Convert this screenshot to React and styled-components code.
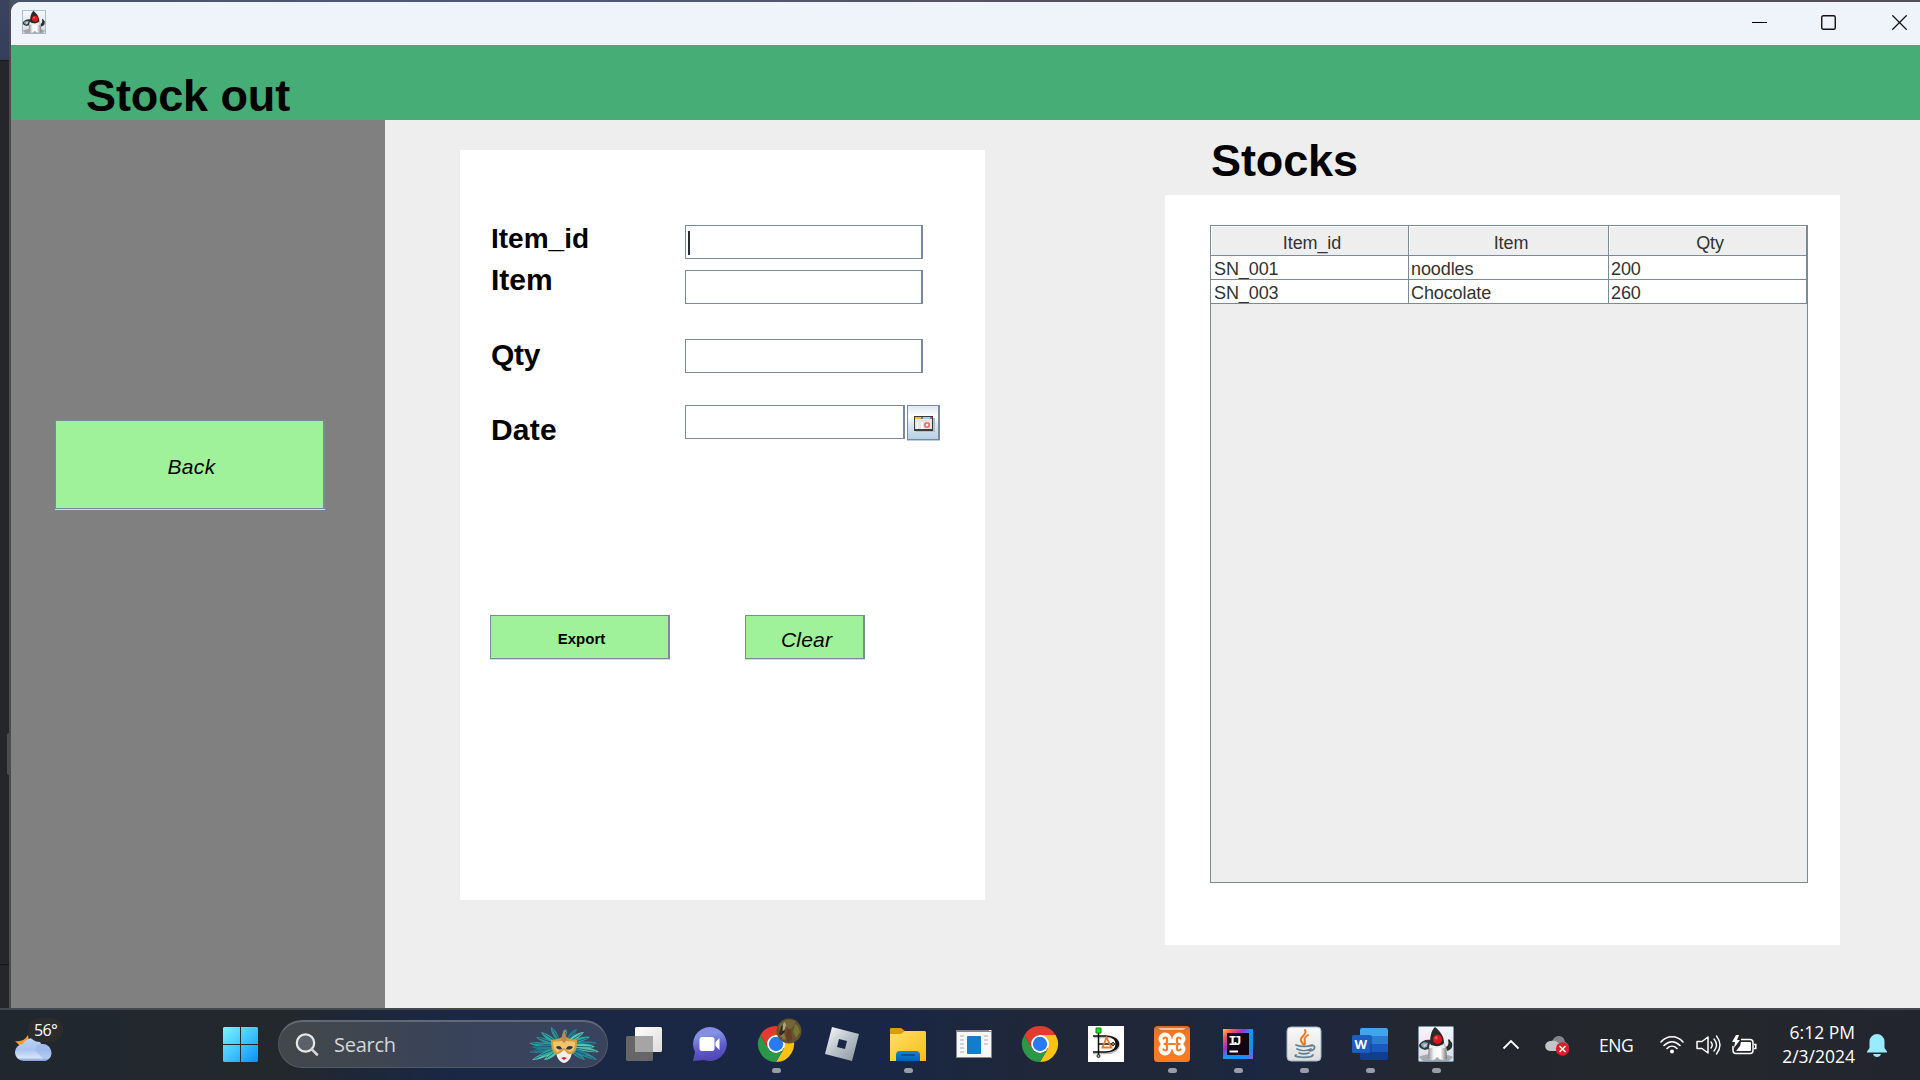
import React from "react";
import styled, { createGlobalStyle } from "styled-components";

const GlobalStyle = createGlobalStyle`
  * { box-sizing: border-box; }
  html, body { margin: 0; padding: 0; overflow: hidden; background: #232529; }
  svg { display: block; flex: none; }
`;

const SWING = `"Liberation Sans", Arial, sans-serif`;
const SHELL = `"Open Sans", "Noto Sans", sans-serif`;
const EDGE = "#7a8a99";

const Desktop = styled.div`
  width: 1920px;
  height: 1080px;
  display: flex;
  flex-direction: column;
  overflow: hidden;
  font-family: ${SWING};
`;

const Stage = styled.div`
  height: 1008px;
  display: flex;
  background: linear-gradient(90deg, #4a5267 0, #505a74 600px, #55505a 1100px, #555057 1920px);
`;

const Behind = styled.div`
  width: 11px;
  display: flex;
  flex-direction: column;
  border-right: 2px solid #4a4c50;
`;

const BehindPart = styled.div`
  height: ${(p) => p.$h}px;
  background: ${(p) => p.$bg};
  border-radius: ${(p) => p.$radius || 0};
  margin-left: ${(p) => p.$inset || 0}px;
`;

const BehindColumn = styled.div`
  background: #242629;
  height: 947px;
`;

const Window = styled.div`
  flex: 1;
  margin-top: 2px;
  display: flex;
  flex-direction: column;
  border-top-left-radius: 10px;
  overflow: hidden;
  background: #eeeeee;
`;

const TitleBar = styled.div`
  height: 43px;
  display: flex;
  align-items: flex-start;
  justify-content: space-between;
  padding: 8px 12px 0 11px;
  background: #eff4fb;
`;

const Controls = styled.div`
  display: flex;
  gap: 54px;
  padding-top: 5px;
`;

const Header = styled.header`
  height: 75px;
  padding-left: 75px;
  background: #45ad75;
`;

const Title = styled.h1`
  margin: 0;
  padding-top: ${(p) => p.$top}px;
  font-size: 45px;
  line-height: 50px;
  font-weight: 700;
  letter-spacing: -0.1px;
  color: #000;
  white-space: nowrap;
`;

const Body = styled.div`
  flex: 1;
  display: flex;
`;

const Sidebar = styled.aside`
  width: 374px;
  padding: 300px 0 0 44px;
  background: #808080;
`;

const Content = styled.main`
  flex: 1;
  display: flex;
  padding-left: 75px;
`;

const SwingButton = styled.button`
  display: block;
  width: ${(p) => p.$w}px;
  height: ${(p) => p.$h}px;
  padding: ${(p) => p.$pad || "0"};
  border: 1px solid ${EDGE};
  border-right-width: 2px;
  border-radius: 0;
  background: #a0f29a;
  box-shadow: 0 1px 0 #b3f3ae;
  color: #000;
  font-family: ${SWING};
  font-size: ${(p) => p.$size}px;
  font-style: ${(p) => (p.$italic ? "italic" : "normal")};
  font-weight: ${(p) => (p.$italic ? 400 : 700)};
  letter-spacing: ${(p) => p.$track || 0}px;
`;

const FormPanel = styled.section`
  width: 525px;
  height: 750px;
  margin-top: 30px;
  padding: 0 30px;
  background: #fff;
`;

const FormGrid = styled.div`
  display: grid;
  grid-template-columns: 195px 1fr;
  height: 465px;
`;

const Stack = styled.div`
  display: flex;
  flex-direction: column;
  padding: ${(p) => p.$top}px 0 0 ${(p) => p.$left || 0}px;
`;

const Label = styled.label`
  margin: ${(p) => p.$gap || 0}px 0 0 0;
  font-size: ${(p) => p.$size || 30}px;
  line-height: 34px;
  height: 34px;
  font-weight: 700;
  letter-spacing: ${(p) => p.$track || 0}px;
  color: #000;
`;

const Field = styled.div`
  width: ${(p) => p.$w || 238}px;
  height: 34px;
  margin-top: ${(p) => p.$gap || 0}px;
  padding: 5px 2px;
  border: 1px solid ${EDGE};
  border-right-width: 2px;
  background: #fff;
`;

const Caret = styled.div`
  width: 2px;
  height: 24px;
  background: #2b2f33;
`;

const DateRow = styled.div`
  display: flex;
  gap: 2px;
  margin-top: 32px;
`;

const DateButton = styled.button`
  width: 33px;
  height: 35px;
  padding: 4px 0 0 3px;
  display: flex;
  align-items: center;
  justify-content: center;
  border: 1px solid ${EDGE};
  border-right-width: 2px;
  border-radius: 0;
  background: linear-gradient(#dde8f3 0, #ffffff 32%, #dce8f3 55%, #b8cfe5 100%);
  box-shadow: 0 1px 0 #b8cfe5;
`;

const Actions = styled.div`
  display: flex;
  gap: 75px;
`;

const StocksColumn = styled.section`
  width: 675px;
  margin-left: 180px;
`;

const StocksHead = styled.div`
  height: 75px;
  padding-left: 46px;
`;

const StocksPanel = styled.div`
  height: 750px;
  padding: 30px 32px 0 45px;
  background: #fff;
`;

const ScrollPane = styled.div`
  height: 658px;
  border: 1px solid ${EDGE};
  background: #eeeeee;
`;

const Row = styled.div`
  display: grid;
  grid-template-columns: 198px 200px 198px;
  grid-template-rows: ${(p) => (p.$head ? 30 : 24)}px;
`;

const Cell = styled.div`
  padding: 1px 0 0 2px;
  overflow: hidden;
  border-right: 1px solid ${EDGE};
  border-bottom: 1px solid ${EDGE};
  background: #fff;
  color: #333;
  font-size: 18px;
  line-height: 24px;
  letter-spacing: -0.1px;

  &:first-child {
    padding-left: 3px;
  }
`;

const HeadCell = styled(Cell)`
  padding: 0 0 0 5px;
  background: #eeeeee;
  box-shadow: inset 1px 1px 0 #fff;
  line-height: 35px;
  text-align: center;

  &:first-child {
    padding-left: 5px;
  }
`;

const Taskbar = styled.footer`
  height: 72px;
  display: flex;
  align-items: flex-start;
  border-top: 2px solid #43494f;
  background: linear-gradient(90deg, #20272f 0, #23282c 290px, #1e2739 360px, #1a2745 460px, #1a2744 900px, #1f2738 1040px, #1f2738 1170px, #1b2742 1250px, #20273a 1330px, #23272e 1440px, #24282c 1700px, #22252e 1920px);
  font-family: ${SHELL};
  color: #fff;
`;

const Weather = styled.div`
  width: 223px;
  height: 70px;
  padding: 8px 0 0 15px;
  display: grid;
`;

const WeatherArt = styled.div`
  grid-area: 1 / 1;
  padding-top: 17px;
`;

const Temperature = styled.div`
  grid-area: 1 / 1;
  width: 35px;
  height: 24px;
  margin-left: 13px;
  padding-left: 6px;
  border-radius: 12px;
  background: #2b2c2b;
  font-size: 16px;
  line-height: 24px;
  letter-spacing: -0.7px;
`;

const StartSlot = styled.div`
  padding-top: 17px;
  width: 55px;
`;

const SearchBox = styled.div`
  width: 330px;
  height: 48px;
  margin-top: 10px;
  padding: 0 7px 0 16px;
  display: flex;
  align-items: center;
  border: 1px solid #525964;
  border-top: 2px solid #626875;
  border-radius: 24px;
  background: linear-gradient(90deg, #42474b 0, #3f4650 90px, #38435a 170px, #39435e 330px);
`;

const SearchText = styled.span`
  flex: 1;
  margin-left: 15px;
  font-size: 20px;
  line-height: 24px;
  letter-spacing: -0.25px;
  color: #d4d6da;
`;

const Apps = styled.div`
  display: flex;
  gap: 30px;
  margin-left: 18px;
  padding-top: 8px;
`;

const AppSlot = styled.div`
  width: 36px;
  height: 60px;
  display: flex;
  flex-direction: column;
  align-items: center;
  padding-top: 8px;
`;

const Running = styled.i`
  width: 9px;
  height: 5px;
  margin-top: 6px;
  border-radius: 3px;
  background: #989da8;
`;

const Tray = styled.div`
  flex: 1;
  height: 70px;
  padding-left: 48px;
  display: flex;
  align-items: center;
`;

const CloudSlot = styled.div`
  margin-left: 25px;
`;

const Language = styled.span`
  width: 61px;
  margin-left: 29px;
  padding-bottom: 1px;
  font-size: 17.5px;
  line-height: 24px;
  letter-spacing: -0.5px;
`;

const StatusIcons = styled.div`
  display: flex;
  gap: 11.5px;
`;

const Clock = styled.div`
  width: 98px;
  display: flex;
  flex-direction: column;
  align-items: flex-end;
  padding-bottom: 2px;
  font-size: 17.5px;
  line-height: 24px;
  letter-spacing: 0;
  margin-right: 12px;
`;

function Duke({ size, id }) {
  return (
    <svg width={size} height={size} viewBox="0 0 36 36">
      <defs>
        <linearGradient id={id + "b"} x1="0" x2="1">
          <stop offset="0" stopColor="#8d8d8d" />
          <stop offset=".3" stopColor="#f4f4f4" />
          <stop offset=".65" stopColor="#fff" />
          <stop offset="1" stopColor="#777" />
        </linearGradient>
        <linearGradient id={id + "g"} x2="0" y2="1">
          <stop offset="0" stopColor="#f5f7fc" />
          <stop offset="1" stopColor="#d9dce5" />
        </linearGradient>
      </defs>
      <rect x=".5" y=".5" width="35" height="35" rx="1" fill={`url(#${id}g)`} stroke="#7795ac" />
      <path d="M1 31c5-4 28-4 34 0l-4 4H5z" fill="#a5a8ae" />
      <path d="M1 19c2-4 7-6 12-5l-1 10c-2-1-3-1-5 0-3-1-6-2-6-5z" fill="#30363b" />
      <path d="M3 18c2-2 5-2 7-1l-1 4-3 1c-2-1-3-2-3-4z" fill="#7fa6c2" />
      <path d="M5 19l4-1-2 3z" fill="#e3ddc8" />
      <path d="M28 21c2-1 3-3 2-7l1-1 3 4c1 4-1 7-5 8z" fill="#2d2d2d" />
      <path d="M13 14c-2 5-3 10-3 18 3 4 7 2 9-1 2 2 7 5 10 2 0-8-1-13-4-18z" fill={`url(#${id}b)`} />
      <path d="M17 1c5 4 9 9 9 16-3 4-10 4-14 1 0-7 1-13 5-17z" fill="#2b2b2b" />
      <path d="M12 18c3 4 10 5 14 0l1 4H11z" fill="#ececec" />
      <circle cx="19.5" cy="13.2" r="4.500" fill="#e2171d" />
      <circle cx="18.2" cy="11.8" r="1.600" fill="#ff5252" />
    </svg>
  );
}

function CalendarIcon() {
  return (
    <svg width="22" height="17" viewBox="0 0 22 17">
      <path d="M2 2h19v14H2z" fill="#babcc0" />
      <path d="M0 0h19v15H0z" fill="#3b3b3b" />
      <path d="M1 3h17v10H1z" fill="#e4e4e4" />
      <path d="M1 1h6v2H1z" fill="#f6b73d" />
      <path d="M7 1h2v2H7zM16 1h2v2h-2z" fill="#777" />
      <path d="M9 1h7v2H9z" fill="#a5d1ef" />
      <path d="M3 6h1v7H3zM7 6h2v7H7z" fill="#fff" />
      <rect x="11" y="7" width="4" height="4" rx="1" fill="#fff" stroke="#ec5c60" strokeWidth="1.6" />
    </svg>
  );
}

function WindowsLogo() {
  return (
    <svg width="35" height="35" viewBox="0 0 35 35">
      <defs>
        <linearGradient id="win" gradientUnits="userSpaceOnUse" x1="0" y1="0" x2="35" y2="35">
          <stop offset="0" stopColor="#7af3ff" />
          <stop offset=".5" stopColor="#43c5ff" />
          <stop offset="1" stopColor="#0790ff" />
        </linearGradient>
      </defs>
      <path fill="url(#win)" d="M1 0h16v17H0V1zM18 0h16l1 1v16H18zM0 18h17v17H1l-1-1zM18 18h17v16l-1 1H18z" />
    </svg>
  );
}

function WeatherIcon() {
  return (
    <svg width="37" height="28" viewBox="0 0 37 28">
      <defs>
        <linearGradient id="cloud" x2="0" y2="1">
          <stop offset="0" stopColor="#b9d4fa" />
          <stop offset=".5" stopColor="#a9c4ef" />
          <stop offset=".85" stopColor="#d5e3f8" />
          <stop offset="1" stopColor="#7795d0" />
        </linearGradient>
      </defs>
      <path d="M13 0c2 8-2 12-9 10l-4-4c6 1 10-1 13-6z" fill="#f49b25" />
      <path d="M9 26a8.500 8.500 0 0 1-1-17C12 1 24 2 26 9c13-1 14 17 2 17z" fill="url(#cloud)" />
      <path d="M20 15c1-5 4-7 8-6 9 0 12 14 2 17" fill="#8facdf" opacity=".45" />
    </svg>
  );
}

const feathers = [
  [-34, -3], [-34, 6], [-31, 14], [-27, -9], [-22, -14], [-31, 1], [-19, 14],
  [-12, -19], [-25, 10], [34, -3], [36, 6], [34, 14], [27, -9], [14, -17],
  [32, 1], [22, 14], [3, -17], [25, 10], [21, -14],
];

function Mask() {
  return (
    <svg width="72" height="40" viewBox="0 0 72 40">
      {feathers.map(([x, y], i) => (
        <g key={i} transform={`translate(35 21) rotate(${(Math.atan2(y, x) * 180) / Math.PI})`}>
          <path
            d={`M5 0C${Math.hypot(x, y) * 0.4} -4 ${Math.hypot(x, y) * 0.85} -3.2 ${Math.hypot(x, y)} 0C${Math.hypot(x, y) * 0.8} 2.2 14 2.2 5 0z`}
            fill={["#2fa9a1", "#257e96", "#57c4ae", "#2b929b"][i % 4]}
          />
          <path d={`M8 0H${Math.hypot(x, y) - 3}`} stroke="#16586f" strokeWidth=".8" />
        </g>
      ))}
      <path d="M28 25h16c0 7-3 12-8 13-5-1-8-6-8-13z" fill="#f3eeee" />
      <path d="M23 15c5-1 8-1 11-3l2-3 2 3c3 2 6 2 11 3 0 8-1 13-6 14-4 1-5-3-7-4-2 1-4 5-8 4-4-2-5-7-5-14z" fill="#d89d3d" />
      <path d="M25 17c4-1 7 0 11-2 4 2 7 1 11 2 0 6-2 10-5 10-3-1-4-4-6-4-3 0-4 4-7 4-3-2-4-6-4-10z" fill="#efc66d" />
      <path d="M33 15l3-11 3 11-3 3z" fill="#bf8650" />
      <path d="M28 22c3-2 5-1 6 2-3 1-5 0-6-2zM38 24c1-3 4-4 7-2-2 3-4 3-7 2z" fill="#27384c" />
      <path d="M33 33l3-1 3 1-3 2z" fill="#d6232d" />
    </svg>
  );
}

function SearchIcon() {
  return (
    <svg width="24" height="24" viewBox="0 0 24 24" fill="none">
      <circle cx="10.500" cy="10" r="8.700" stroke="#e6e8ea" strokeWidth="2.200" fill="#5b6168" />
      <path d="M16.800 16.300L22 21.500" stroke="#d4d5d8" strokeWidth="2.600" strokeLinecap="round" />
    </svg>
  );
}

function TaskView() {
  return (
    <svg width="36" height="36" viewBox="0 0 36 36">
      <defs>
        <linearGradient id="tv" x2="1" y2="1">
          <stop stopColor="#fff" />
          <stop offset="1" stopColor="#dcdcdc" />
        </linearGradient>
      </defs>
      <rect x="9" y="1" width="27" height="25" rx="1.500" fill="url(#tv)" />
      <rect y="10" width="27" height="25" rx="1.500" fill="#666" />
      <path d="M9 10h18v16H9z" fill="#a5a5a5" />
    </svg>
  );
}

function Chat() {
  return (
    <svg width="36" height="36" viewBox="0 0 36 36">
      <defs>
        <linearGradient id="chat" x2=".2" y2="1">
          <stop stopColor="#8f86e3" />
          <stop offset=".3" stopColor="#8292e0" />
          <stop offset=".65" stopColor="#625ed0" />
          <stop offset="1" stopColor="#5048b5" />
        </linearGradient>
      </defs>
      <path d="M18 1a17 17 0 1 1-6 33L1 35l2-9A17 17 0 0 1 18 1z" fill="url(#chat)" />
      <rect x="7.500" y="11" width="15" height="14" rx="2.500" fill="#fff" />
      <path d="M23.500 16l4-4v12l-4-4z" fill="#fff" />
    </svg>
  );
}

function Chrome({ badge }) {
  return (
    <svg width="36" height="36" viewBox="0 0 36 36" overflow="visible">
      <path d="M18 9h15.600A18 18 0 0 1 18 36l7.800-13.500z" fill="#fbc116" />
      <path d="M2.400 9A18 18 0 0 0 18 36l7.800-13.500A9 9 0 0 1 10.200 22.500z" fill="#2b9848" />
      <path d="M2.400 9l7.800 13.500A9 9 0 0 1 18 9h15.600A18 18 0 0 0 2.400 9z" fill="#e33b2e" />
      <circle cx="18" cy="18" r="9" fill="#fff" />
      <circle cx="18" cy="18" r="7.200" fill="#297af0" />
      {badge && (
        <g>
          <circle cx="31" cy="5" r="12.500" fill="#65512b" />
          <path d="M21 0c4-7 13-8 17-4l-5 7-5-2-6 7z" fill="#75653a" />
          <path d="M23 1l3-4 1 8-3 6-3-3z" fill="#302b20" />
          <path d="M25-2l1.500-2 1.500 3-1.500 5-2 1z" fill="#b9a67f" />
          <path d="M29 3l4 1 1 9-4 3-2-6z" fill="#693c2a" />
          <path d="M37-2l3 2 2 6-4 6-3-6z" fill="#787633" />
          <path d="M22 10l4-3 2 6-2 1z" fill="#8c7440" />
        </g>
      )}
    </svg>
  );
}

function Roblox() {
  return (
    <svg width="36" height="36" viewBox="0 0 36 36">
      <defs>
        <linearGradient id="rbx" x2="1" y2="1">
          <stop stopColor="#fff" />
          <stop offset=".5" stopColor="#b9c1c9" />
          <stop offset="1" stopColor="#8c969f" />
        </linearGradient>
      </defs>
      <path fillRule="evenodd" fill="url(#rbx)" d="M8 1l27 7-7 27-27-7zM15 13l-2 8 8 2 2-8z" />
    </svg>
  );
}

function Folder() {
  return (
    <svg width="36" height="36" viewBox="0 0 36 36">
      <defs>
        <linearGradient id="fold" x2="1" y2="1">
          <stop stopColor="#ffe06b" />
          <stop offset="1" stopColor="#f9bd13" />
        </linearGradient>
        <linearGradient id="fblue" x2="0" y2="1">
          <stop stopColor="#1583d7" />
          <stop offset="1" stopColor="#0063b5" />
        </linearGradient>
      </defs>
      <path d="M0 3q0-1 1-1h10l4 3v5H0z" fill="#dc9d08" />
      <path d="M0 8h11l4-3h20l1 1v29H0z" fill="url(#fold)" />
      <path d="M6 35v-6q0-4 4-4h16q4 0 4 4v6z" fill="url(#fblue)" />
      <path d="M11 29h14" stroke="#08467d" strokeWidth="1.500" />
    </svg>
  );
}

function AppWindow() {
  return (
    <svg width="36" height="36" viewBox="0 0 36 36">
      <path d="M0 4h36v28H0z" fill="#888" />
      <path d="M1 6h34v25H1z" fill="#f8f8f8" />
      <path d="M33 4h2v1h-2z" fill="#fff" />
      <path d="M4 10h4M4 14h4M4 18h4M4 22h4M4 26h4M28 10h4M28 14h4M28 18h4" stroke="#d2d2d2" strokeWidth="2" />
      <rect x="11" y="10" width="14" height="18" rx="1" fill="#127dca" />
    </svg>
  );
}

function Dia() {
  return (
    <svg width="36" height="36" viewBox="0 0 36 36" fill="none">
      <path d="M0 0h36v36H0z" fill="#fff" />
      <path d="M6 11h11c18-2 18 17 0 16H5" stroke="#bbb" strokeWidth="2.500" />
      <path d="M5 10h13c14 0 14 16 0 16H5M10.500 7v23M10.500 18h15" stroke="#111" strokeWidth="1.500" />
      <path d="M23 10c11 3 11 13 0 16 6-4 6-12 0-16z" fill="#111" />
      <path d="M18.500 11.500l5 10h-9z" stroke="#e9792d" strokeWidth="1.800" />
      <path d="M8 2h5v5H8z" fill="#18e619" stroke="#167d18" />
      <circle cx="25" cy="18" r="1.500" fill="#999" stroke="#222" />
      <circle cx="10.500" cy="30" r="1.500" fill="#aaa" stroke="#222" />
    </svg>
  );
}

function Xampp() {
  return (
    <svg width="36" height="36" viewBox="0 0 36 36" fill="none">
      <defs>
        <linearGradient id="xam" x2="0" y2="1">
          <stop stopColor="#d36b2e" />
          <stop offset=".2" stopColor="#f17727" />
          <stop offset="1" stopColor="#fa7c23" />
        </linearGradient>
      </defs>
      <rect width="36" height="36" rx="3.500" fill="url(#xam)" />
      <path d="M4 2h28l-3 2H7z" fill="#ffc297" />
      <g fill="#fff">
        <circle cx="11" cy="13" r="6.500" />
        <circle cx="25" cy="13" r="6.500" />
        <circle cx="11" cy="23" r="6.500" />
        <circle cx="25" cy="23" r="6.500" />
        <path d="M11 13h14v10H11z" />
      </g>
      <path d="M9.500 12.500q2-2 3.500 0v3.500q0 2-2.500 2 2.500 0 2.500 2v3.500q-1.500 2-3.500 0M26.500 12.500q-2-2-3.500 0v3.500q0 2 2.500 2-2.500 0-2.500 2v3.500q1.500 2 3.500 0M15 18h6" stroke="#f77b25" strokeWidth="2.200" strokeLinecap="round" strokeLinejoin="round" />
    </svg>
  );
}

const IconText = styled.text`
  font-family: ${(p) => p.$family};
  font-size: ${(p) => p.$size}px;
  font-weight: 700;
  fill: #fff;
`;

function IntelliJ() {
  return (
    <svg width="36" height="36" viewBox="0 0 36 36">
      <defs>
        <linearGradient id="ij" x2="1" y2="1">
          <stop stopColor="#ffc83b" />
          <stop offset=".18" stopColor="#f45360" />
          <stop offset=".35" stopColor="#a92dc7" />
          <stop offset=".5" stopColor="#1398f5" />
          <stop offset=".8" stopColor="#168cf2" />
          <stop offset="1" stopColor="#8b58e8" />
        </linearGradient>
      </defs>
      <path d="M3 3h30v30H3z" fill="url(#ij)" />
      <path d="M7 7h22v22H7z" fill="#13050f" />
      <IconText x="8.500" y="18.500" $size={13.5} $family={`"Liberation Mono", monospace`} textLength="13">IJ</IconText>
      <path d="M9.500 24.500h8.500v2H9.500z" fill="#fff" />
    </svg>
  );
}

function Java() {
  return (
    <svg width="36" height="36" viewBox="0 0 36 36" fill="none">
      <defs>
        <linearGradient id="jav" x2="0" y2="1">
          <stop stopColor="#fafafa" />
          <stop offset="1" stopColor="#dedede" />
        </linearGradient>
      </defs>
      <rect x="1" y="1" width="34" height="34" rx="4" fill="url(#jav)" stroke="#9bb5c6" />
      <path d="M19 4c3 5-6 6-4 11 1 2 2 3 3 4M22 9c-5 3-3 5-3 9" stroke="#e77c2c" strokeWidth="2" strokeLinecap="round" />
      <path d="M10 19c4 2 12 2 16 0M11 23c4 2 10 2 14 0M13 27c3 1 7 1 10 0M25 20c5-2 5 4-1 5M10 29c-5 2 15 4 17 0" stroke="#607f92" strokeWidth="1.700" strokeLinecap="round" />
    </svg>
  );
}

function Word() {
  return (
    <svg width="36" height="36" viewBox="0 0 36 36">
      <path d="M10 2h24q2 0 2 2v6H8V4q0-2 2-2z" fill="#41a5ee" />
      <path d="M8 10h28v8H8z" fill="#2b7cd3" />
      <path d="M8 18h28v8H8z" fill="#185abd" />
      <path d="M8 26h28v6q0 2-2 2H10q-2 0-2-2z" fill="#103f91" />
      <path d="M8 9h10q2 0 2 2v16q0 1-1 1H8z" fill="#124188" opacity=".5" />
      <rect y="9" width="18" height="18" rx="1.500" fill="#1c5dc0" />
      <IconText x="2.500" y="22.500" $size={13} $family={SHELL} textLength="13">W</IconText>
    </svg>
  );
}

const taskbarApps = [
  [<TaskView />, false],
  [<Chat />, false],
  [<Chrome badge />, true],
  [<Roblox />, false],
  [<Folder />, true],
  [<AppWindow />, false],
  [<Chrome />, false],
  [<Dia />, false],
  [<Xampp />, true],
  [<IntelliJ />, true],
  [<Java />, true],
  [<Word />, true],
  [<Duke size={36} id="dukeBar" />, true],
];

const stock = [
  ["SN_001", "noodles", "200"],
  ["SN_003", "Chocolate", "260"],
];

function TitleControls() {
  return (
    <Controls>
      <svg width="15" height="15" viewBox="0 0 15 15"><path d="M0 7h15v1H0z" fill="#000" /></svg>
      <svg width="15" height="15" viewBox="0 0 15 15" fill="none"><rect x=".75" y=".75" width="13.500" height="13.500" rx="1.500" stroke="#111" strokeWidth="1.400" /></svg>
      <svg width="18" height="15" viewBox="-2 0 18 15" fill="none"><path d="M.3.300l14.400 14.400M14.700.300L.3 14.700" stroke="#111" strokeWidth="1.300" /></svg>
    </Controls>
  );
}

function TrayArea() {
  return (
    <Tray>
      <svg width="18" height="12" viewBox="0 0 18 12" fill="none"><path d="M1.500 9.500L9 2l7.500 7.500" stroke="#fff" strokeWidth="1.800" /></svg>
      <CloudSlot>
        <svg width="25" height="21" viewBox="0 0 25 21" fill="none">
          <path d="M7 7c2-8 12-8 13 0 3 1 4 4 4 7H9z" fill="#818488" />
          <path d="M5 16C-2 15-1 6 6 6c5-1 8 1 11 7v3z" fill="#c2c4c6" />
          <circle cx="17.500" cy="14" r="6.700" fill="#d71e2b" />
          <path d="M14.500 11l6 6M20.500 11l-6 6" stroke="#fff" strokeWidth="1.500" />
        </svg>
      </CloudSlot>
      <Language>ENG</Language>
      <StatusIcons>
        <svg width="24" height="20" viewBox="0 0 24 20" fill="none">
          <path d="M1 7c6-7 16-7 22 0M4 10.500c5-5 11-5 16 0M7 13.500c3-3 7-3 10 0" stroke="#fff" strokeWidth="1.600" strokeLinecap="round" />
          <circle cx="12" cy="16.500" r="2" fill="#fff" />
        </svg>
        <svg width="25" height="20" viewBox="0 0 25 20" fill="none">
          <path d="M1 6.500h5L12 2v16l-6-4.500H1z" stroke="#fff" strokeWidth="1.500" strokeLinejoin="round" />
          <path d="M15 7q2.500 3 0 6M18 4q5 6 0 12M20.500 1q7 9 0 18" stroke="#fff" strokeWidth="1.400" strokeLinecap="round" />
        </svg>
        <svg width="25" height="21" viewBox="0 0 25 21" fill="none">
          <path d="M9 4.500h9q3 0 3 3v8q0 3-3 3H4q-3 0-3-3V11M22 9.500h1.800v4H22" stroke="#fff" strokeWidth="1.500" />
          <path d="M9 7h9q1 0 1 1v7q0 1-1 1H4l4-5z" fill="#fff" />
          <path d="M4 0L0 7h3l-1 6 6-8H5l2-5z" fill="#fff" />
        </svg>
      </StatusIcons>
      <Clock>
        <span>6:12 PM</span>
        <span>2/3/2024</span>
      </Clock>
      <svg width="20" height="23" viewBox="0 0 20 23">
        <path d="M10 0a7.500 7.500 0 0 1 7.500 7.500V14l2.500 3.500v1H0v-1L2.500 14V7.500A7.500 7.500 0 0 1 10 0zM6 20h8q-1 3-4 3t-4-3z" fill="#99ebff" />
      </svg>
    </Tray>
  );
}

export default function App() {
  return (
    <>
      <GlobalStyle />
      <Desktop>
        <Stage>
          <Behind>
            <BehindPart $h={60} $bg="linear-gradient(#38445f, #333f5b)" />
            <BehindPart $h={1} $bg="#16181b" />
            <BehindColumn>
              <BehindPart $h={672} $bg="#242629" />
              <BehindPart $h={42} $bg="#4c4d52" $radius="4px 0 0 4px" $inset={7} />
              <BehindPart $h={189} $bg="#242629" />
              <BehindPart $h={1} $bg="#141517" />
            </BehindColumn>
          </Behind>
          <Window>
            <TitleBar>
              <Duke size={24} id="dukeTitle" />
              <TitleControls />
            </TitleBar>
            <Header>
              <Title $top={26}>Stock out</Title>
            </Header>
            <Body>
              <Sidebar>
                <SwingButton $w={270} $h={89} $size={21} $italic $track={0.3} $pad="4px 0 0 4px">Back</SwingButton>
              </Sidebar>
              <Content>
                <FormPanel>
                  <FormGrid>
                    <Stack $top={72} $left={1}>
                      <Label $size={28}>Item_id</Label>
                      <Label $gap={7}>Item</Label>
                      <Label $gap={41} $track={-0.3}>Qty</Label>
                      <Label $gap={41} $track={0.2}>Date</Label>
                    </Stack>
                    <Stack $top={75}>
                      <Field><Caret /></Field>
                      <Field $gap={11} />
                      <Field $gap={35} />
                      <DateRow>
                        <Field $w={220} />
                        <DateButton><CalendarIcon /></DateButton>
                      </DateRow>
                    </Stack>
                  </FormGrid>
                  <Actions>
                    <SwingButton $w={180} $h={44} $size={15} $pad="3px 0 0 4px">Export</SwingButton>
                    <SwingButton $w={120} $h={44} $size={21} $italic $track={0.2} $pad="6px 0 0 4px">Clear</SwingButton>
                  </Actions>
                </FormPanel>
                <StocksColumn>
                  <StocksHead>
                    <Title as="h2" $top={16}>Stocks</Title>
                  </StocksHead>
                  <StocksPanel>
                    <ScrollPane>
                      <Row $head>
                        <HeadCell>Item_id</HeadCell>
                        <HeadCell>Item</HeadCell>
                        <HeadCell>Qty</HeadCell>
                      </Row>
                      {stock.map((cells) => (
                        <Row key={cells[0]}>
                          {cells.map((c) => <Cell key={c}>{c}</Cell>)}
                        </Row>
                      ))}
                    </ScrollPane>
                  </StocksPanel>
                </StocksColumn>
              </Content>
            </Body>
          </Window>
        </Stage>
        <Taskbar>
          <Weather>
            <WeatherArt><WeatherIcon /></WeatherArt>
            <Temperature>56°</Temperature>
          </Weather>
          <StartSlot><WindowsLogo /></StartSlot>
          <SearchBox>
            <SearchIcon />
            <SearchText>Search</SearchText>
            <Mask />
          </SearchBox>
          <Apps>
            {taskbarApps.map(([icon, running], i) => (
              <AppSlot key={i}>
                {icon}
                {running && <Running />}
              </AppSlot>
            ))}
          </Apps>
          <TrayArea />
        </Taskbar>
      </Desktop>
    </>
  );
}
